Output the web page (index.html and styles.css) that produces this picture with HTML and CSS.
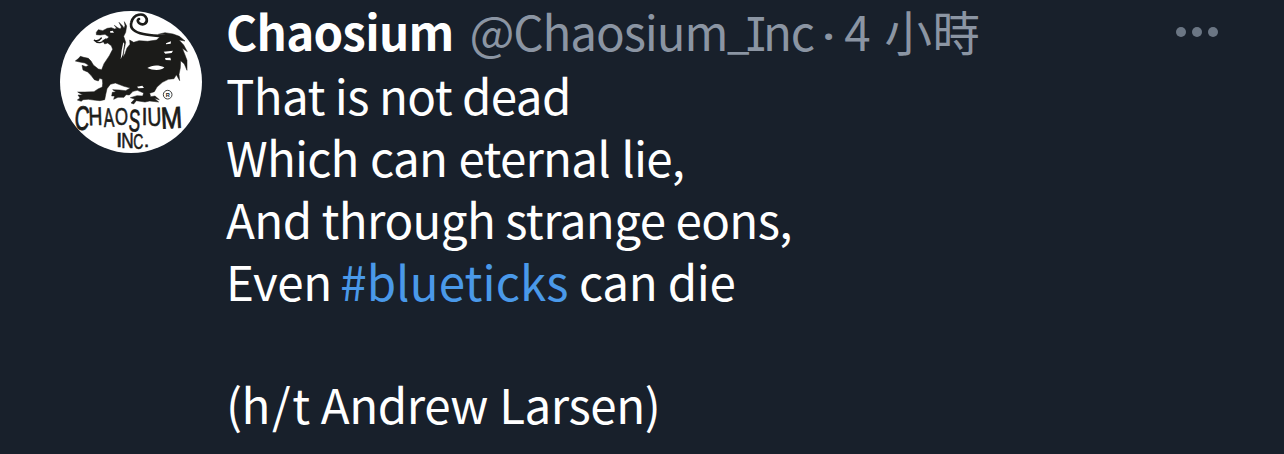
FILE: index.html
```html
<!doctype html>
<html lang="zh-Hant">
<head>
<meta charset="UTF-8">
<meta name="viewport" content="width=device-width,initial-scale=1">
<title>Chaosium</title>
<link rel="stylesheet" href="styles.css">
</head>
<body>

<article class="tweet">
  <!-- Avatar -->
  <a class="avatar" href="#" aria-label="Chaosium">
    <svg viewBox="30 32 426 426">
      <circle class="disc" cx="243" cy="245" r="213"/>
      <!-- dragon -->
      <path class="ink" d="M139 96 L145 88 L158 91 L172 84 L184 82 L194 86 L200 84 L193 75 L203 82 L211 86 L214 80 L207 66 L218 77 L222 84 L225 76 L223 64 L230 77 L227 96 L221 108 L227 126 L222 150 L219 171 L225 160 L231 143 L240 132 L239 119 L251 126 L267 121 L293 123 L320 119 L328 111 L348 104 L325 102 L345 97 L369 101 L388 108 L405 122 L387 119 L401 134 L412 154 L397 144 L405 164 L411 180 L411 210 L403 191 L392 181 L391 202 L387 222 L389 241 L379 223 L372 235 L355 237 L337 246 L321 260 L313 274 L299 279 L302 289 L315 287 L328 298 L313 294 L326 305 L299 302 L285 305 L259 301 L251 311 L243 308 L254 296 L241 292 L261 286 L278 287 L281 278 L262 270 L249 273 L238 284 L228 283 L222 291 L204 291 L191 297 L194 287 L185 287 L187 276 L198 275 L188 268 L208 269 L227 271 L241 263 L222 258 L196 248 L181 252 L171 265 L167 283 L164 298 L150 301 L137 300 L115 297 L99 298 L94 303 L82 299 L90 293 L84 284 L98 284 L83 275 L104 275 L132 274 L144 266 L157 260 L158 249 L157 237 L149 234 L145 242 L133 238 L123 225 L113 215 L99 209 L96 195 L108 199 L116 195 L105 188 L89 185 L76 182 L86 174 L91 168 L101 171 L115 174 L123 182 L130 194 L145 206 L155 208 L162 190 L178 166 L188 147 L184 136 L173 128 L164 131 L158 120 L169 117 L177 110 L165 102 L151 104 L139 103Z"/>
      <path class="line tail" d="M382 114 C350 105 310 108 280 101 C252 96 239 83 244 66 C250 41 281 34 290 55 C293 70 278 77 267 68 C261 62 263 57 267 56"/>
      <path class="line" d="M168 116 C158 129 143 131 132 119 C139 122 147 123 154 113"/>
      <path class="disc" d="M180 93 L188 91 L192 97 L181 97Z M348 129 L363 123 L362 130 L348 132Z M341 154 L369 151 L365 158 L346 160Z M345 173 L361 172 L363 180 L347 179Z M292 203 C306 194 325 193 343 201 C336 211 309 211 292 203Z M261 259 L277 256 L282 263 L265 264Z M220 126 L223 130 L218 163 L212 177 L215 150Z"/>
      <circle class="reg" cx="353" cy="283" r="13"/>
      <text class="reg-r" x="347" y="289">R</text>
      <!-- wordmark -->
      <g class="word">
        <text transform="translate(72 387) rotate(4) scale(.8 1.34)">C</text>
        <text transform="translate(116 375) rotate(-2) scale(.76 1)">H</text>
        <text transform="translate(162 380) rotate(-3) scale(.62 1.04)">A</text>
        <text transform="translate(195 374) scale(.66 .92)">O</text>
        <text transform="translate(235 392) rotate(3) scale(.68 1.22)">S</text>
        <text transform="translate(275 373) scale(.8 .95)">I</text>
        <text transform="translate(293 377) rotate(-2) scale(.76 1.02)">U</text>
        <text transform="translate(334 385) rotate(-3) scale(1.02 1.2)">M</text>
        <text transform="translate(198 440) scale(.9 .8)">I</text>
        <text transform="translate(214 443) scale(.68 .84)">N</text>
        <text transform="translate(250 446) scale(.55 .86)">C</text>
        <text transform="translate(281 441) scale(.8)">.</text>
      </g>
    </svg>
  </a>

  <div class="body">
    <!-- Name, handle and time -->
    <header class="meta">
      <a class="name" href="#">Chaosium</a>
      <a class="handle" href="#">@Chaosium<span class="under">_</span><span class="slab">I</span>nc</a>
      <span class="dot">·</span>
      <time class="time">4 小時</time>
      <button class="more" aria-label="More"><i></i><i></i><i></i></button>
    </header>

    <!-- Tweet text -->
    <div class="text">
      <p>That is not dead</p>
      <p class="wide">Which can eternal lie,</p>
      <p>And through strange eons,</p>
      <p class="tag-line">Even <a href="#">#blueticks</a> can die</p>
      <p class="credit">(h<span class="slash">/</span>t Andrew Larsen)</p>
    </div>
  </div>
</article>

</body>
</html>
```
FILE: styles.css
```css
html,body{margin:0;padding:0;height:100%}
body{
  background:#18202b;color:#fff;overflow:hidden;
  font-family:"Noto Sans CJK TC","Noto Sans",sans-serif;font-size:47.5px}
a{color:inherit;text-decoration:none}

.tweet{display:flex;align-items:flex-start;gap:24px;padding:0 65px 0 60px}

/* ---- Avatar --------------------------------------------------------- */
.avatar{flex:none;width:142px;height:142px;margin-top:11px}
.avatar svg{display:block;width:100%;height:100%;overflow:visible}
.disc{fill:#fff}
.ink{fill:#1b1b19;stroke:#1b1b19;stroke-width:1.5;stroke-linejoin:round}
.line{fill:none;stroke:#1b1b19;stroke-width:4;stroke-linecap:round}
.tail{stroke-width:8}
.reg{fill:none;stroke:#1b1b19;stroke-width:2.5}
.reg-r{font:bold 17px "Liberation Sans",sans-serif;fill:#1b1b19}
.word{font:76px "Liberation Sans",sans-serif;fill:#1b1b19;stroke:#1b1b19;stroke-width:2}

/* ---- Header --------------------------------------------------------- */
.body{flex:1;min-width:0}
.meta{display:flex;align-items:baseline;height:64px;line-height:62px;color:#8b95a3;white-space:nowrap}
.name{color:#fff;font-weight:bold;letter-spacing:-.7px;margin-right:16px}
.handle{letter-spacing:-1.1px}
.under{display:inline-block;transform:translateY(-3px) scaleX(.85);margin:0 -3px 0 -2px}
.slab{font-family:Inter,sans-serif;font-size:46px;font-feature-settings:"cv08";margin:0 -2px}
.dot{font-family:"Noto Sans",sans-serif;font-size:40px;font-weight:bold;margin:0 10px 0 9px}
.time{letter-spacing:.6px;word-spacing:2px}
.more{
  align-self:flex-start;display:flex;gap:4px;margin:27px 0 0 auto;padding:0;
  border:0;background:none}
.more i{width:10px;height:10px;margin:0 1px;border-radius:50%;background:#6b7684}

/* ---- Text ----------------------------------------------------------- */
.text p{margin:0;height:62px;line-height:62px;white-space:nowrap;letter-spacing:-.6px}
.text a{color:#4a99e9}
.text .wide{letter-spacing:-.8px;word-spacing:1.6px}
.text .tag-line{letter-spacing:-.35px}
.text .tag-line a{letter-spacing:.1px;margin-left:-2px}
.text .credit{margin-top:61px;letter-spacing:-.45px;word-spacing:1px}
.slash{margin:0 2px}
```
